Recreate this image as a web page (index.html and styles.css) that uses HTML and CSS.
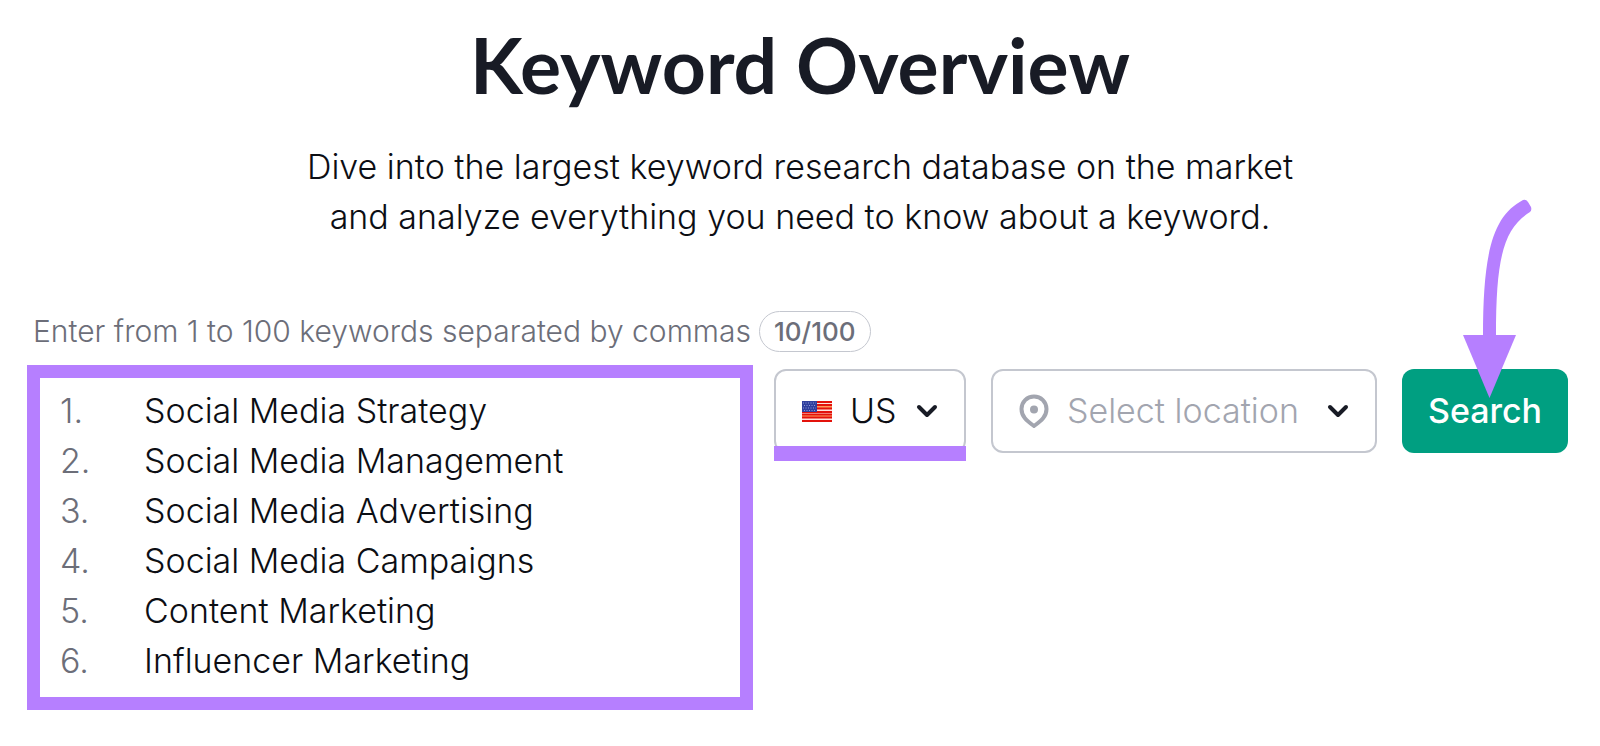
FILE: index.html
```html
<!DOCTYPE html>
<html lang="en">
<head>
    <meta charset="UTF-8">
    <meta name="viewport" content="width=device-width, initial-scale=1.0">
    <title>Keyword Overview</title>
    <link rel="stylesheet" href="styles.css">
</head>
<body>
<header class="intro">
    <h1>Keyword Overview</h1>
    <p>Dive into the largest keyword research database on the market<br>and analyze everything you need to know about a keyword.</p>
</header>

<form class="search-form">
    <div class="hint">
        <label for="keywords">Enter from 1 to 100 keywords separated by commas</label>
        <span class="counter">10/100</span>
    </div>

    <div class="fields">
        <div class="keywords">
            <ol class="line-numbers">
                <li>1.</li>
                <li>2.</li>
                <li>3.</li>
                <li>4.</li>
                <li>5.</li>
                <li>6.</li>
            </ol>
            <textarea id="keywords" rows="6" spellcheck="false">Social Media Strategy
Social Media Management
Social Media Advertising
Social Media Campaigns
Content Marketing
Influencer Marketing</textarea>
        </div>

        <div class="controls">
            <div class="dropdown country">
                <svg class="flag" viewBox="0 0 30 21" width="30" height="21" aria-hidden="true">
                    <rect width="30" height="21" fill="#ffe3dc"/>
                    <rect y="4" width="30" height="3" fill="#ff9a5c"/>
                    <rect y="13" width="30" height="3" fill="#ff9a5c"/>
                    <path d="M0 1h30M0 4h30M0 7.500h30M0 11h30M0 13.500h30M0 16.500h30M0 20h30" stroke="#e3120b" stroke-width="2"/>
                    <rect width="15" height="11" fill="#2f3f9e"/>
                    <path d="M1 2h13M2 4.500h12M1 7h13M2 9.500h12" stroke="#8f9bd6" stroke-width="1" stroke-dasharray="1 1.500"/>
                </svg>
                <select aria-label="Country">
                    <option>US</option>
                </select>
                <svg class="chevron" viewBox="0 0 22 14" width="22" height="14" aria-hidden="true">
                    <path d="M3 3l8 8 8-8"/>
                </svg>
            </div>

            <div class="dropdown location">
                <svg class="pin" viewBox="0 0 30 34" width="30" height="34" aria-hidden="true">
                    <path d="M15 2.500C8 2.500 2.500 8 2.500 15c0 7.500 5 11.500 12.500 17 7.500-5.500 12.500-9.500 12.500-17 0-7-5.500-12.500-12.500-12.500z"/>
                    <circle cx="15" cy="15.500" r="4"/>
                </svg>
                <select aria-label="Location">
                    <option>Select location</option>
                </select>
                <svg class="chevron" viewBox="0 0 22 14" width="22" height="14" aria-hidden="true">
                    <path d="M3 3l8 8 8-8"/>
                </svg>
            </div>

            <div class="submit">
                <button type="submit">Search</button>
                <svg class="arrow" viewBox="0 0 72 200" width="72" height="200" aria-hidden="true">
                    <path d="M20 137C20 52 30 17 60 1q3-1 5 2l3 5q1 3-1 5C40 30 33 60 33 137z"/>
                    <path d="M0 136h53L26.500 199z"/>
                </svg>
            </div>
        </div>
    </div>
</form>
</body>
</html>
```

FILE: styles.css
```css
* {
    box-sizing: border-box;
}

body {
    margin: 0;
    background: #fff;
    color: #0c0e14;
    font-family: Inter, "Liberation Sans", sans-serif;
    font-size: 34px;
    font-weight: 350;
    line-height: 50px;
}

.intro {
    padding-top: 14px;
    text-align: center;
}

h1 {
    margin: 0 0 28px;
    color: #181b25;
    font-family: Lato, Inter, sans-serif;
    font-size: 77px;
    font-weight: 700;
    line-height: 100px;
}

.intro p {
    margin: 0 0 69px;
}

.search-form {
    padding: 0 32px 36px 27px;
}

.hint {
    display: flex;
    align-items: center;
    gap: 8px;
    margin-bottom: 13px;
    padding-left: 6px;
    color: #6c6e79;
    font-size: 30px;
    line-height: 39px;
}

.counter {
    padding: 0 14px;
    border: 1px solid #c4c7cf;
    border-radius: 21px;
    font-size: 26px;
    font-weight: 500;
}

.fields {
    display: flex;
    align-items: flex-start;
    gap: 21px;
}

.keywords {
    display: flex;
    flex: 1;
    min-width: 0;
    padding: 8px 20px 11px;
    border: 13px solid #b67fff;
}

.line-numbers {
    width: 84px;
    margin: 0;
    padding: 0;
    list-style: none;
    color: #6c6e79;
}

textarea {
    flex: 1;
    min-width: 0;
    height: 300px;
    padding: 0;
    border: none;
    outline: none;
    resize: none;
    overflow: hidden;
    background: none;
    color: inherit;
    font: inherit;
}

.controls {
    display: flex;
    gap: 25px;
    padding-top: 4px;
}

.dropdown {
    display: flex;
    align-items: center;
    height: 84px;
    padding: 0 26px;
    border: 2px solid #c4c7cf;
    border-radius: 12px;
}

.dropdown select {
    flex: 1;
    min-width: 0;
    padding: 0;
    border: none;
    outline: none;
    appearance: none;
    background: none;
    color: inherit;
    font: inherit;
}

.country {
    position: relative;
    width: 192px;
}

/* highlight bar over the lower edge */
.country::after {
    content: "";
    position: absolute;
    left: -2px;
    right: -2px;
    bottom: -10px;
    height: 15px;
    background: #b67fff;
}

.flag,
.pin {
    margin-right: 18px;
}

.location {
    width: 386px;
    color: #a2a5af;
}

.pin {
    fill: none;
    stroke: #a2a5af;
    stroke-width: 4;
}

.pin circle {
    fill: #a2a5af;
    stroke: none;
}

.chevron {
    fill: none;
    stroke: #181b25;
    stroke-width: 4;
    stroke-linecap: round;
    stroke-linejoin: round;
}

.submit {
    position: relative;
}

button {
    width: 166px;
    height: 84px;
    padding: 0;
    border: none;
    border-radius: 12px;
    background: #009f81;
    color: #fff;
    font: inherit;
    font-weight: 500;
    cursor: pointer;
}

.arrow {
    position: absolute;
    left: 61px;
    bottom: 54px;
    fill: #b67fff;
    pointer-events: none;
}
```
